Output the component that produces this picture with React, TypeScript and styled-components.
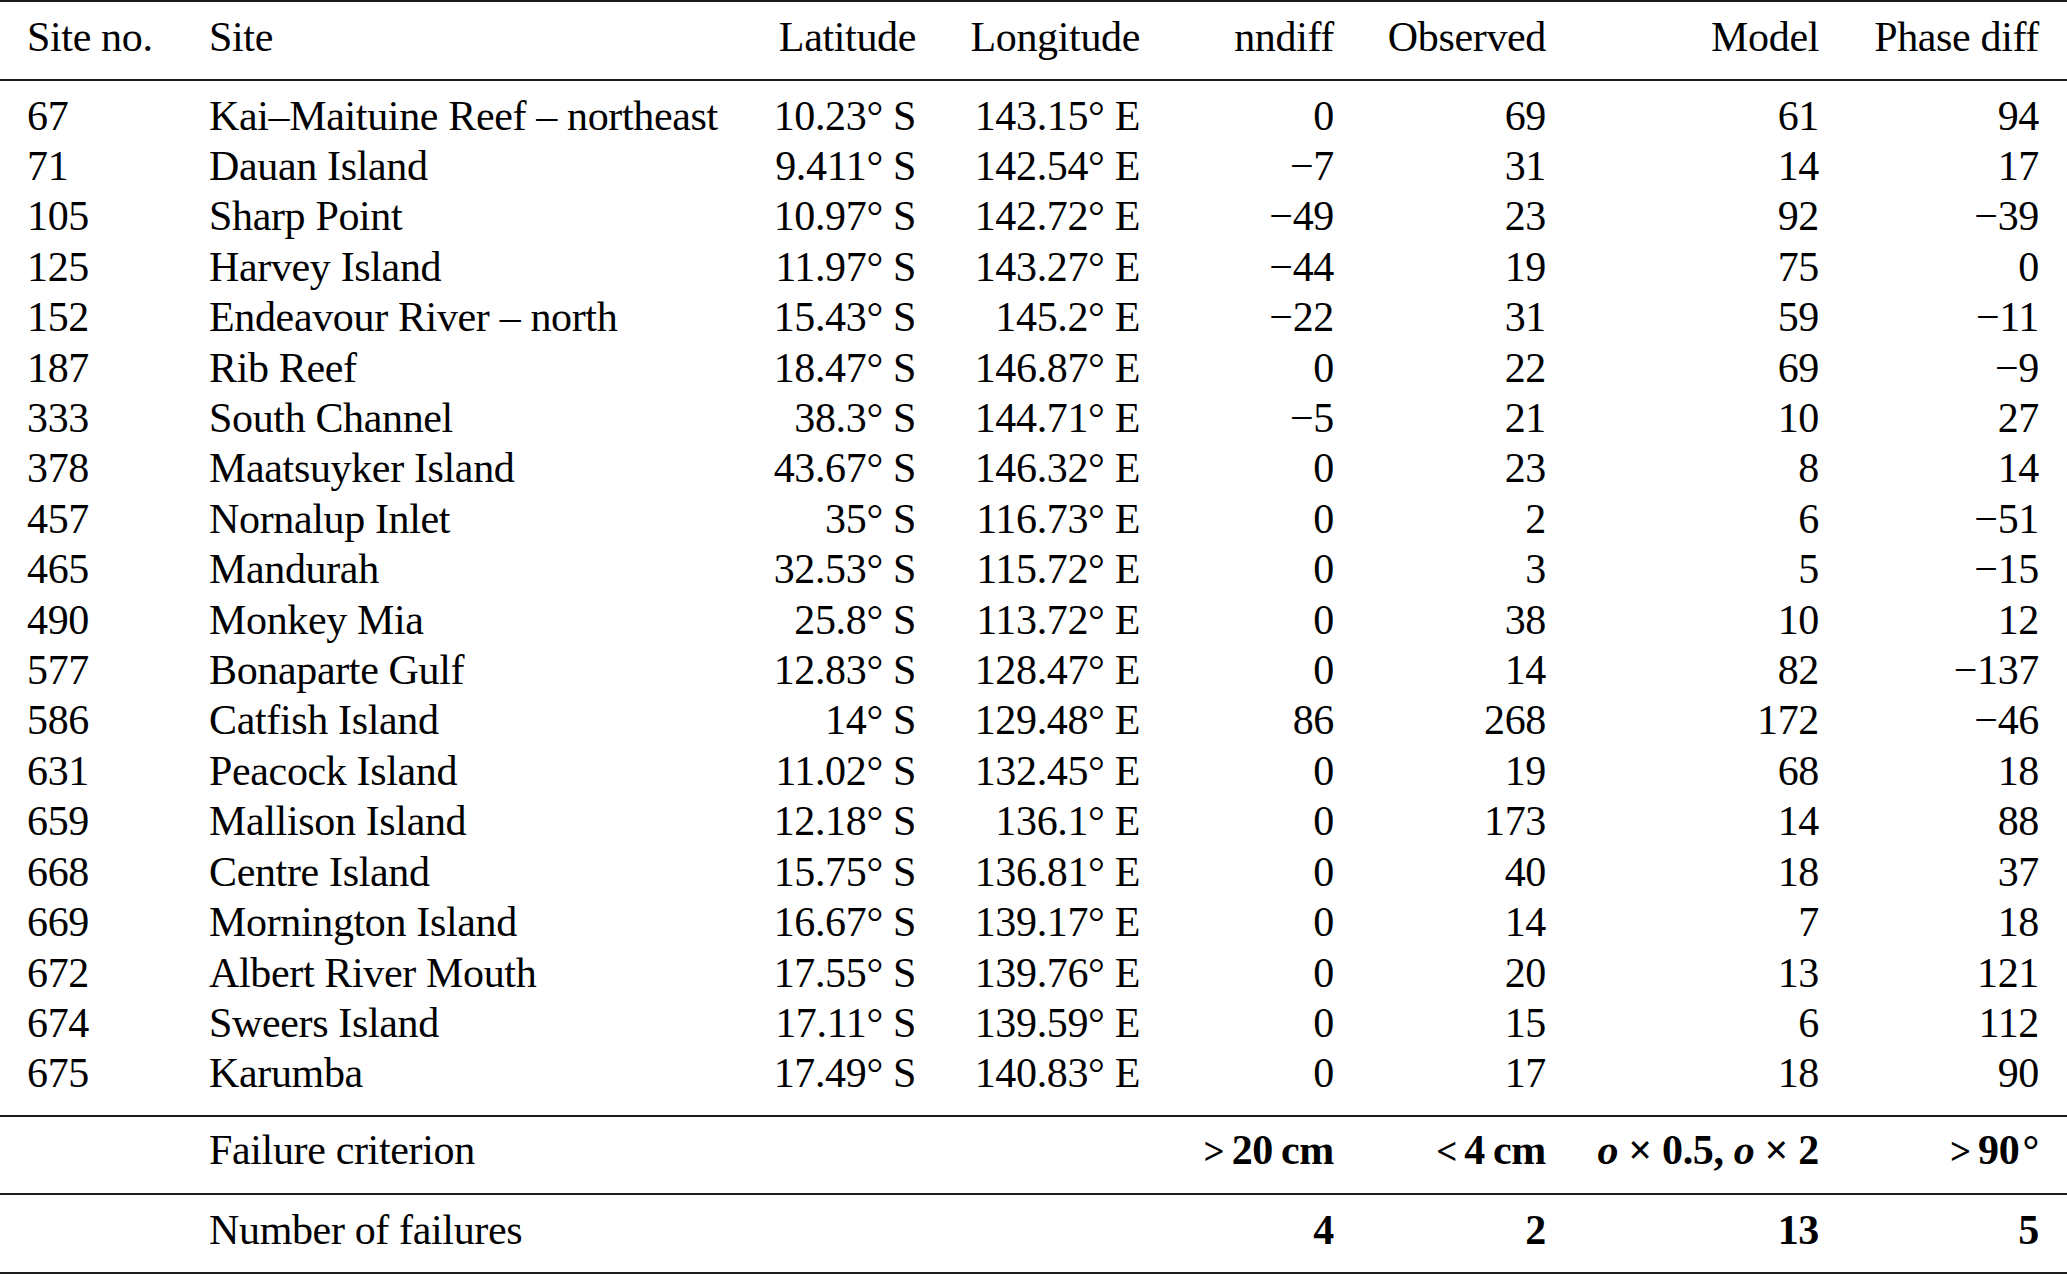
import React from "react";
import styled, { createGlobalStyle } from "styled-components";

const GlobalStyle = createGlobalStyle`
  html, body {
    margin: 0;
    padding: 0;
    background: #ffffff;
  }
  body {
    font-family: "Liberation Serif", "Times New Roman", serif;
    color: #000000;
  }
`;

const RULE = "2px solid #1c1c1c";

const Table = styled.table`
  width: 2067px;
  table-layout: fixed;
  border-collapse: separate;
  border-spacing: 0;
  font-family: "Liberation Serif", "Times New Roman", serif;
  font-size: 42px;
  letter-spacing: -0.35px;
  line-height: 50.4px;
  color: #000;
`;

const Col = styled.col<{ $w: number }>`
  width: ${(p) => p.$w}px;
`;

const Row = styled.tr<{
  $padTop?: number;
  $padBottom?: number;
  $ruleTop?: boolean;
  $ruleBottom?: boolean;
}>`
  & > td,
  & > th {
    padding-top: ${(p) => p.$padTop ?? 0}px;
    padding-bottom: ${(p) => p.$padBottom ?? 0}px;
    border-top: ${(p) => (p.$ruleTop ? RULE : "none")};
    border-bottom: ${(p) => (p.$ruleBottom ? RULE : "none")};
  }
`;

const HeadCell = styled.th<{ $align?: "left" | "right"; $padL?: number; $padR?: number }>`
  font-weight: normal;
  text-align: ${(p) => p.$align ?? "right"};
  padding-left: ${(p) => p.$padL ?? 0}px;
  padding-right: ${(p) => p.$padR ?? 0}px;
  white-space: nowrap;
  vertical-align: top;
`;

const Cell = styled.td<{ $align?: "left" | "right"; $padL?: number; $padR?: number; $bold?: boolean }>`
  text-align: ${(p) => p.$align ?? "right"};
  padding-left: ${(p) => p.$padL ?? 0}px;
  padding-right: ${(p) => p.$padR ?? 0}px;
  font-weight: ${(p) => (p.$bold ? "bold" : "normal")};
  white-space: nowrap;
  vertical-align: top;
`;

const MathO = styled.i`
  font-weight: bold;
  font-style: italic;
`;

const Rel = styled.span`
  font-size: 0.88em;
  line-height: 0;
  font-weight: bold;
  margin-right: 0.2em;
`;

type DataRow = [string, string, string, string, string, string, string, string];

const rows: DataRow[] = [
  ["67", "Kai–Maituine Reef – northeast", "10.23° S", "143.15° E", "0", "69", "61", "94"],
  ["71", "Dauan Island", "9.411° S", "142.54° E", "−7", "31", "14", "17"],
  ["105", "Sharp Point", "10.97° S", "142.72° E", "−49", "23", "92", "−39"],
  ["125", "Harvey Island", "11.97° S", "143.27° E", "−44", "19", "75", "0"],
  ["152", "Endeavour River – north", "15.43° S", "145.2° E", "−22", "31", "59", "−11"],
  ["187", "Rib Reef", "18.47° S", "146.87° E", "0", "22", "69", "−9"],
  ["333", "South Channel", "38.3° S", "144.71° E", "−5", "21", "10", "27"],
  ["378", "Maatsuyker Island", "43.67° S", "146.32° E", "0", "23", "8", "14"],
  ["457", "Nornalup Inlet", "35° S", "116.73° E", "0", "2", "6", "−51"],
  ["465", "Mandurah", "32.53° S", "115.72° E", "0", "3", "5", "−15"],
  ["490", "Monkey Mia", "25.8° S", "113.72° E", "0", "38", "10", "12"],
  ["577", "Bonaparte Gulf", "12.83° S", "128.47° E", "0", "14", "82", "−137"],
  ["586", "Catfish Island", "14° S", "129.48° E", "86", "268", "172", "−46"],
  ["631", "Peacock Island", "11.02° S", "132.45° E", "0", "19", "68", "18"],
  ["659", "Mallison Island", "12.18° S", "136.1° E", "0", "173", "14", "88"],
  ["668", "Centre Island", "15.75° S", "136.81° E", "0", "40", "18", "37"],
  ["669", "Mornington Island", "16.67° S", "139.17° E", "0", "14", "7", "18"],
  ["672", "Albert River Mouth", "17.55° S", "139.76° E", "0", "20", "13", "121"],
  ["674", "Sweers Island", "17.11° S", "139.59° E", "0", "15", "6", "112"],
  ["675", "Karumba", "17.49° S", "140.83° E", "0", "17", "18", "90"],
];

const widths = [209, 551, 156, 224, 194, 212, 273, 248];
const FIRST_PAD_L = 27;
const LAST_PAD_R = 28;

export default function App() {
  return (
    <>
      <GlobalStyle />
      <Table>
        <colgroup>
          {widths.map((w, i) => (
            <Col key={i} $w={w} />
          ))}
        </colgroup>
        <thead>
          <Row $ruleTop $ruleBottom $padTop={9.6} $padBottom={17}>
            <HeadCell $align="left" $padL={FIRST_PAD_L}>Site no.</HeadCell>
            <HeadCell $align="left">Site</HeadCell>
            <HeadCell>Latitude</HeadCell>
            <HeadCell>Longitude</HeadCell>
            <HeadCell>nndiff</HeadCell>
            <HeadCell>Observed</HeadCell>
            <HeadCell>Model</HeadCell>
            <HeadCell $padR={LAST_PAD_R}>Phase diff</HeadCell>
          </Row>
        </thead>
        <tbody>
          {rows.map((r, i) => {
            const first = i === 0;
            const last = i === rows.length - 1;
            return (
              <Row
                key={r[0]}
                $padTop={first ? 9.6 : 0}
                $padBottom={last ? 16 : 0}
                $ruleBottom={last}
              >
                <Cell $align="left" $padL={FIRST_PAD_L}>{r[0]}</Cell>
                <Cell $align="left">{r[1]}</Cell>
                <Cell>{r[2]}</Cell>
                <Cell>{r[3]}</Cell>
                <Cell>{r[4]}</Cell>
                <Cell>{r[5]}</Cell>
                <Cell>{r[6]}</Cell>
                <Cell $padR={LAST_PAD_R}>{r[7]}</Cell>
              </Row>
            );
          })}
        </tbody>
        <tbody>
          <Row $padTop={8.6} $padBottom={17} $ruleBottom>
            <Cell $align="left" $padL={FIRST_PAD_L}></Cell>
            <Cell $align="left">Failure criterion</Cell>
            <Cell></Cell>
            <Cell></Cell>
            <Cell $bold>
              <Rel>&gt;</Rel>
              {"20\u2009cm"}
            </Cell>
            <Cell $bold>
              <Rel>&lt;</Rel>
              {"4\u2009cm"}
            </Cell>
            <Cell $bold>
              <MathO>o</MathO>
              {" × 0.5, "}
              <MathO>o</MathO>
              {" × 2"}
            </Cell>
            <Cell $bold $padR={LAST_PAD_R}>
              <Rel>&gt;</Rel>
              {"90\u200a°"}
            </Cell>
          </Row>
        </tbody>
        <tbody>
          <Row $padTop={10.6} $padBottom={16} $ruleBottom>
            <Cell $align="left" $padL={FIRST_PAD_L}></Cell>
            <Cell $align="left">Number of failures</Cell>
            <Cell></Cell>
            <Cell></Cell>
            <Cell $bold>4</Cell>
            <Cell $bold>2</Cell>
            <Cell $bold>13</Cell>
            <Cell $bold $padR={LAST_PAD_R}>5</Cell>
          </Row>
        </tbody>
      </Table>
    </>
  );
}
